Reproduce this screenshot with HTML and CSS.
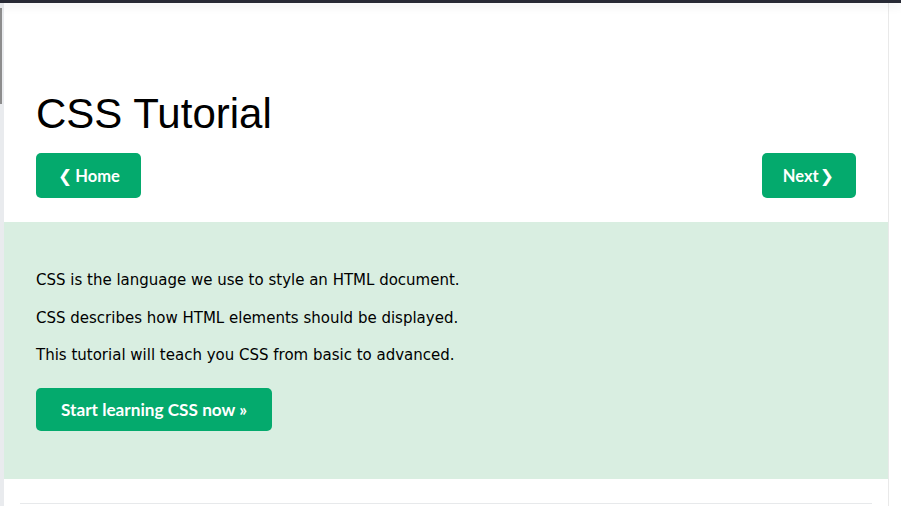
FILE: index.html
```html
<!DOCTYPE html>
<html lang="en">
<head>
<meta charset="utf-8">
<title>CSS Tutorial</title>
<link rel="stylesheet" href="styles.css">
</head>
<body>
<div class="topbar"></div>
<div class="layout">
  <div class="sidebar"><div class="thumb"></div></div>
  <main class="main">
    <h1 class="title">CSS Tutorial</h1>
    <div class="nav">
      <a class="btn btn-nav" href="#"><span class="chev chev-left">&#10094;</span> Home</a>
      <a class="btn btn-nav" href="#">Next <span class="chev">&#10095;</span></a>
    </div>
    <section class="intro">
      <p>CSS is the language we use to style an HTML document.</p>
      <p>CSS describes how HTML elements should be displayed.</p>
      <p>This tutorial will teach you CSS from basic to advanced.</p>
      <a class="btn btn-large" href="#">Start learning CSS now &raquo;</a>
    </section>
    <hr class="rule">
  </main>
  <div class="gutter"></div>
</div>
</body>
</html>
```
FILE: styles.css
```css
html, body {
  margin: 0;
  padding: 0;
  background: #ffffff;
  height: 100%;
  overflow: hidden;
}
body {
  font-family: "DejaVu Sans", Verdana, sans-serif;
  color: #000;
}
.topbar {
  height: 3px;
  background: #282A35;
  position: relative;
  z-index: 2;
  box-shadow: 0 3px 10px rgba(0, 0, 0, 0.10);
}
.layout {
  display: flex;
  height: 503px;
}
.sidebar {
  width: 4px;
  flex: none;
  background: #e9ebee;
}
.thumb {
  width: 2px;
  height: 96px;
  margin-top: 5px;
  background: #8d8d8d;
}
.main {
  width: 884px;
  flex: none;
  border-right: 1px solid #e9e9e9;
  display: flex;
  flex-direction: column;
}
.gutter {
  flex: 1;
  background: #fff;
}
.title {
  font-family: "Liberation Sans", Arial, sans-serif;
  font-weight: 400;
  font-size: 42px;
  line-height: 48px;
  margin: 87px 0 0 32px;
  color: #000;
}
.nav {
  display: flex;
  justify-content: space-between;
  padding: 0 32px;
  margin-top: 15px;
}
.btn {
  display: inline-flex;
  align-items: center;
  justify-content: center;
  background: #04AA6D;
  color: #fff;
  text-decoration: none;
  border-radius: 5px;
  font-family: "Lato", "Source Sans Pro", sans-serif;
  font-weight: 700;
}
.btn-nav {
  height: 45px;
  padding: 0 21px;
  font-size: 16.5px;
}
.chev {
  font-family: "DejaVu Sans", sans-serif;
  font-weight: 700;
  font-size: 17px;
  margin: 0 1px;
}
.chev-left {
  margin-right: 3px;
}
.intro {
  background: #D9EEE1;
  margin-top: 24px;
  padding: 47px 32px 48px 32px;
  display: flex;
  flex-direction: column;
  align-items: flex-start;
}
.intro p {
  margin: 0 0 15px 0;
  font-size: 15px;
  line-height: 22.5px;
}
.btn-large {
  margin-top: 6px;
  height: 43px;
  padding: 0 25px;
  font-size: 17.2px;
}
.rule {
  border: 0;
  border-top: 1px solid #e7e9eb;
  margin: 24px 16px 0 16px;
}
```
